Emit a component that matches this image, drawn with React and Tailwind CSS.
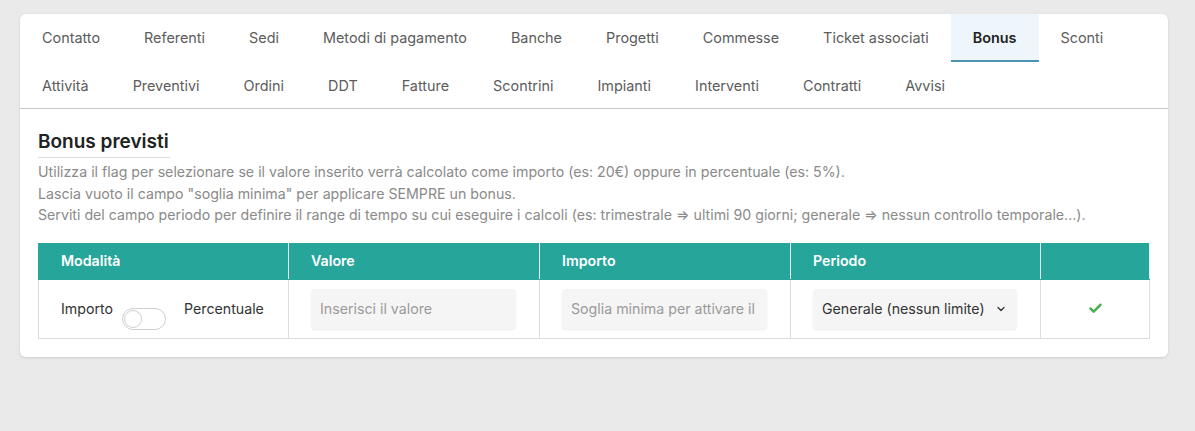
import { Check, ChevronDown } from 'lucide-react'

const ROW1 = ['Contatto', 'Referenti', 'Sedi', 'Metodi di pagamento', 'Banche', 'Progetti', 'Commesse', 'Ticket associati', 'Bonus', 'Sconti']
const ROW2 = ['Attività', 'Preventivi', 'Ordini', 'DDT', 'Fatture', 'Scontrini', 'Impianti', 'Interventi', 'Contratti', 'Avvisi']

function Tab({ label, active, second }) {
  return (
    <div
      className={`px-[22px] pt-[2px] flex items-center text-[14.4px] ${
        second ? 'h-[46px]' : 'h-[48px] border-b-2'
      } ${active ? 'bg-[#eef6fc] border-[#4b93b3] font-semibold text-[#222]' : 'border-transparent text-[#5c5c5c]'}`}
    >
      {label}
    </div>
  )
}

export default function App() {
  return (
    <div className="min-h-[431px] bg-[#ebeaea] pt-[14px] pb-4" style={{ fontFamily: 'Inter, "Noto Sans", sans-serif' }}>
      <div className="ml-[20px] w-[1148px] bg-white rounded-md shadow-[0_1px_3px_rgba(0,0,0,0.12)]">
        {/* tabs */}
        <div className="border-b border-[#c8c8c8]">
          <div className="flex">
            {ROW1.map((t) => (
              <Tab key={t} label={t} active={t === 'Bonus'} />
            ))}
          </div>
          <div className="flex">
            {ROW2.map((t) => (
              <Tab key={t} label={t} second />
            ))}
          </div>
        </div>

        <div className="px-[18px] pt-[21px] pb-[18px]">
          <h2 className="text-[19px] leading-[24px] font-semibold text-[#222] inline-block pb-[3px] border-b border-[#dcdcdc] pr-[1px]">
            Bonus previsti
          </h2>
          <div className="mt-[3px] text-[14.2px] leading-[21.5px] text-[#8a8a8a]">
            <p>Utilizza il flag per selezionare se il valore inserito verrà calcolato come importo (es: 20€) oppure in percentuale (es: 5%).</p>
            <p>Lascia vuoto il campo "soglia minima" per applicare SEMPRE un bonus.</p>
            <p>Serviti del campo periodo per definire il range di tempo su cui eseguire i calcoli (es: trimestrale ⇒ ultimi 90 giorni; generale ⇒ nessun controllo temporale...).</p>
          </div>

          <table className="mt-[17px] w-full border-collapse text-[14.2px] table-fixed">
            <colgroup>
              <col className="w-[250px]" />
              <col className="w-[251px]" />
              <col className="w-[251px]" />
              <col className="w-[250px]" />
              <col />
            </colgroup>
            <thead>
              <tr className="bg-[#26a69a] text-white h-[36px]">
                {['Modalità', 'Valore', 'Importo', 'Periodo', ''].map((h, i) => (
                  <th key={i} className="text-left font-semibold px-[22px] border border-[#26a69a] border-r-[#e8f5f3]">
                    {h}
                  </th>
                ))}
              </tr>
            </thead>
            <tbody>
              <tr className="h-[59px]">
                <td className="border border-[#dcdcdc] px-[22px]">
                  <div className="flex items-center text-[#333]">
                    <span>Importo</span>
                    <span className="ml-[9px] mt-[20px] w-[44px] h-[22px] rounded-full border border-[#cfcfcf] bg-white flex items-center px-[1px]">
                      <span className="w-[18px] h-[18px] rounded-full border border-[#cfcfcf] bg-white" />
                    </span>
                    <span className="ml-[18px]">Percentuale</span>
                  </div>
                </td>
                <td className="border border-[#dcdcdc] px-[22px]">
                  <input
                    readOnly
                    placeholder="Inserisci il valore"
                    className="h-[40px] w-[205px] rounded bg-[#f5f5f5] shadow-[0_1px_2px_rgba(0,0,0,0.08)] px-[9px] outline-none placeholder:text-[#9a9a9a]"
                  />
                </td>
                <td className="border border-[#dcdcdc] px-[22px]">
                  <input
                    readOnly
                    placeholder="Soglia minima per attivare il bonus"
                    className="h-[40px] w-[205px] rounded bg-[#f5f5f5] shadow-[0_1px_2px_rgba(0,0,0,0.08)] px-[9px] outline-none placeholder:text-[#9a9a9a]"
                  />
                </td>
                <td className="border border-[#dcdcdc] px-[22px]">
                  <div className="h-[40px] w-[204px] rounded bg-[#f5f5f5] shadow-[0_1px_2px_rgba(0,0,0,0.08)] pl-[9px] pr-[10px] flex items-center justify-between text-[#333]">
                    <span>Generale (nessun limite)</span>
                    <ChevronDown className="w-[12px] h-[12px] text-[#333]" strokeWidth={2.5} />
                  </div>
                </td>
                <td className="border border-[#dcdcdc]">
                  <div className="flex justify-center">
                    <Check className="w-[15px] h-[15px] text-[#4caf50]" strokeWidth={4} />
                  </div>
                </td>
              </tr>
            </tbody>
          </table>
        </div>
      </div>
    </div>
  )
}
